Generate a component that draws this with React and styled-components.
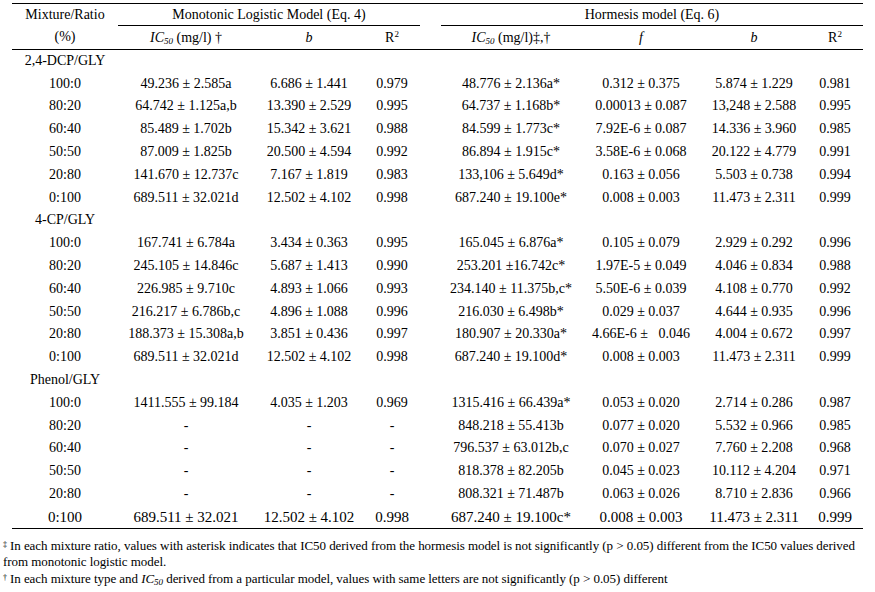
import React from 'react';
import styled, { createGlobalStyle } from 'styled-components';

const GlobalStyle = createGlobalStyle`
  body {
    margin: 0;
    background: #fff;
    font-family: "Liberation Serif", "Times New Roman", serif;
    color: #000;
  }
`;

const Page = styled.div`
  width: 875px;
  height: 592px;
  padding-top: 3px;
  box-sizing: border-box;
  overflow: hidden;
`;

const Table = styled.table`
  margin-left: 12px;
  border-collapse: collapse;
  table-layout: fixed;
  width: 851px;
  font-size: 14px;
  border-top: 1px solid #000;
  border-bottom: 1px solid #000;
`;

const HeadRow = styled.tr`
  height: ${(p) => p.$h}px;
`;

const Th = styled.th`
  font-weight: normal;
  padding: 0;
  text-align: center;
  vertical-align: middle;
  white-space: nowrap;
  border-bottom: ${(p) => (p.$rule ? '1px solid #000' : 'none')};
  line-height: 16px;
`;

const Row = styled.tr`
  height: 22.8px;
  font-size: ${(p) => (p.$big ? 15 : 14)}px;
`;

const Td = styled.td`
  padding: 0;
  text-align: center;
  vertical-align: middle;
  white-space: pre;
  line-height: 16px;
`;

const Ital = styled.i`
  font-style: italic;
`;

const Sub = styled.sub`
  font-size: 9px;
  vertical-align: -2px;
  line-height: 0;
`;

const Sup = styled.sup`
  font-size: 9px;
  vertical-align: 5px;
  line-height: 0;
`;

const Notes = styled.div`
  padding: 8px 0 0 3px;
  font-size: 13px;
  line-height: 16px;
  letter-spacing: -0.05px;
  white-space: nowrap;
`;

const Mark = styled.span`
  font-size: 8px;
  vertical-align: 3px;
  margin-right: 3px;
`;

const IC50 = () => (
  <>
    <Ital>IC</Ital>
    <Sub>
      <Ital>50</Ital>
    </Sub>
  </>
);

const R2 = () => (
  <>
    R<Sup>2</Sup>
  </>
);

const groups = [
  {
    name: '2,4-DCP/GLY',
    rows: [
      ['100:0', '49.236 ± 2.585a', '6.686 ± 1.441', '0.979', '48.776 ± 2.136a*', '0.312 ± 0.375', '5.874 ± 1.229', '0.981'],
      ['80:20', '64.742 ± 1.125a,b', '13.390 ± 2.529', '0.995', '64.737 ± 1.168b*', '0.00013 ± 0.087', '13,248 ± 2.588', '0.995'],
      ['60:40', '85.489 ± 1.702b', '15.342 ± 3.621', '0.988', '84.599 ± 1.773c*', '7.92E-6 ± 0.087', '14.336 ± 3.960', '0.985'],
      ['50:50', '87.009 ± 1.825b', '20.500 ± 4.594', '0.992', '86.894 ± 1.915c*', '3.58E-6 ± 0.068', '20.122 ± 4.779', '0.991'],
      ['20:80', '141.670 ± 12.737c', '7.167 ± 1.819', '0.983', '133,106 ± 5.649d*', '0.163 ± 0.056', '5.503 ± 0.738', '0.994'],
      ['0:100', '689.511 ± 32.021d', '12.502 ± 4.102', '0.998', '687.240 ± 19.100e*', '0.008 ± 0.003', '11.473 ± 2.311', '0.999'],
    ],
  },
  {
    name: '4-CP/GLY',
    rows: [
      ['100:0', '167.741 ± 6.784a', '3.434 ± 0.363', '0.995', '165.045 ± 6.876a*', '0.105 ± 0.079', '2.929 ± 0.292', '0.996'],
      ['80:20', '245.105 ± 14.846c', '5.687 ± 1.413', '0.990', '253.201 ±16.742c*', '1.97E-5 ± 0.049', '4.046 ± 0.834', '0.988'],
      ['60:40', '226.985 ± 9.710c', '4.893 ± 1.066', '0.993', '234.140 ± 11.375b,c*', '5.50E-6 ± 0.039', '4.108 ± 0.770', '0.992'],
      ['50:50', '216.217 ± 6.786b,c', '4.896 ± 1.088', '0.996', '216.030 ± 6.498b*', '0.029 ± 0.037', '4.644 ± 0.935', '0.996'],
      ['20:80', '188.373 ± 15.308a,b', '3.851 ± 0.436', '0.997', '180.907 ± 20.330a*', '4.66E-6 ±   0.046', '4.004 ± 0.672', '0.997'],
      ['0:100', '689.511 ± 32.021d', '12.502 ± 4.102', '0.998', '687.240 ± 19.100d*', '0.008 ± 0.003', '11.473 ± 2.311', '0.999'],
    ],
  },
  {
    name: 'Phenol/GLY',
    rows: [
      ['100:0', '1411.555 ± 99.184', '4.035 ± 1.203', '0.969', '1315.416 ± 66.439a*', '0.053 ± 0.020', '2.714 ± 0.286', '0.987'],
      ['80:20', '-', '-', '-', '848.218 ± 55.413b', '0.077 ± 0.020', '5.532 ± 0.966', '0.985'],
      ['60:40', '-', '-', '-', '796.537 ± 63.012b,c', '0.070 ± 0.027', '7.760 ± 2.208', '0.968'],
      ['50:50', '-', '-', '-', '818.378 ± 82.205b', '0.045 ± 0.023', '10.112 ± 4.204', '0.971'],
      ['20:80', '-', '-', '-', '808.321 ± 71.487b', '0.063 ± 0.026', '8.710 ± 2.836', '0.966'],
      ['0:100', '689.511 ± 32.021', '12.502 ± 4.102', '0.998', '687.240 ± 19.100c*', '0.008 ± 0.003', '11.473 ± 2.311', '0.999'],
    ],
  },
];

const widths = [106, 136, 110, 56, 21, 140, 120, 106, 56];

const App = () => {
  return (
    <Page>
      <GlobalStyle />
      <Table>
        <colgroup>
          {widths.map((w, i) => (
            <col key={i} style={{ width: w }} />
          ))}
        </colgroup>
        <thead>
          <HeadRow $h={22}>
            <Th>Mixture/Ratio</Th>
            <Th colSpan={3} $rule>Monotonic Logistic Model (Eq. 4)</Th>
            <Th />
            <Th colSpan={4} $rule>Hormesis model (Eq. 6)</Th>
          </HeadRow>
          <HeadRow $h={24} style={{ borderBottom: '1px solid #000' }}>
            <Th>(%)</Th>
            <Th>
              <IC50 /> (mg/l) †
            </Th>
            <Th>
              <Ital>b</Ital>
            </Th>
            <Th>
              <R2 />
            </Th>
            <Th />
            <Th>
              <IC50 /> (mg/l)‡,†
            </Th>
            <Th>
              <Ital>f</Ital>
            </Th>
            <Th>
              <Ital>b</Ital>
            </Th>
            <Th>
              <R2 />
            </Th>
          </HeadRow>
        </thead>
        <tbody>
          {groups.map((g, gi) => (
            <React.Fragment key={g.name}>
              <Row>
                <Td>{g.name}</Td>
                <Td colSpan={8} />
              </Row>
              {g.rows.map((r, ri) => (
                <Row key={ri} $big={gi === 2 && ri === 5}>
                  {r.slice(0, 4).map((c, ci) => (
                    <Td key={ci}>{c}</Td>
                  ))}
                  <Td />
                  {r.slice(4).map((c, ci) => (
                    <Td key={ci + 4}>{c}</Td>
                  ))}
                </Row>
              ))}
            </React.Fragment>
          ))}
        </tbody>
      </Table>
      <Notes>
        <Mark>‡</Mark>In each mixture ratio, values with asterisk indicates that IC50 derived from the hormesis model is not significantly (p &gt; 0.05) different from the IC50 values derived
        <br />
        from monotonic logistic model.
        <br />
        <Mark>†</Mark>In each mixture type and <IC50 /> derived from a particular model, values with same letters are not significantly (p &gt; 0.05) different
      </Notes>
    </Page>
  );
};

export default App;
